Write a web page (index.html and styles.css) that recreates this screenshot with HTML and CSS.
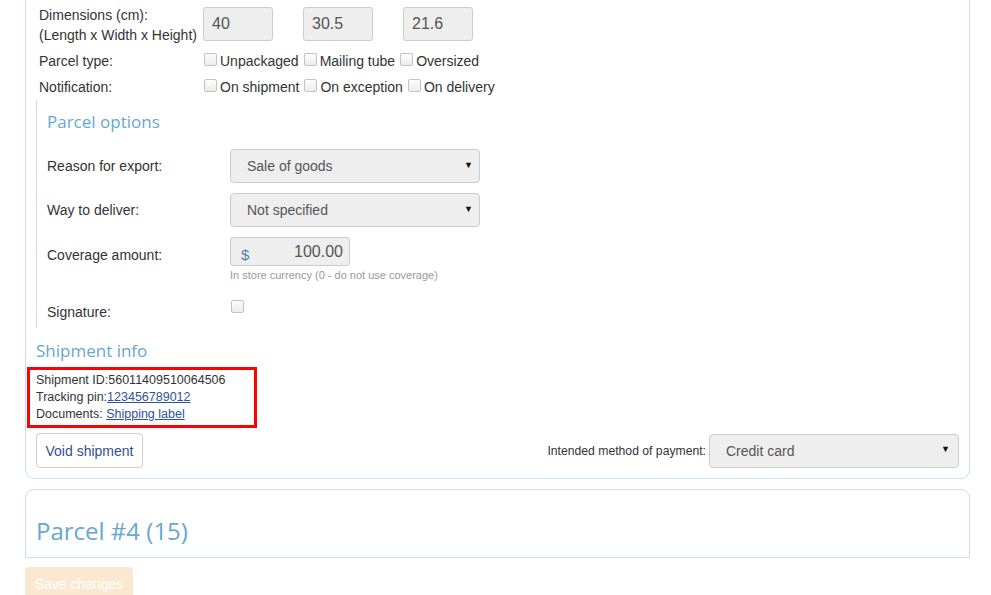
FILE: index.html
```html
<!DOCTYPE html>
<html>
<head>
<meta charset="utf-8">
<link rel="stylesheet" href="styles.css">
</head>
<body>
<div class="card card-main">
  <div class="frow frow-dims">
    <div class="flabel">Dimensions (cm):<br>(Length x Width x Height)</div>
    <div class="dims">
      <div class="tinput">40</div>
      <div class="tinput">30.5</div>
      <div class="tinput">21.6</div>
    </div>
  </div>
  <div class="frow">
    <div class="flabel">Parcel type:</div>
    <div class="checks">
      <label class="chk"><span class="box"></span>Unpackaged</label>
      <label class="chk"><span class="box"></span>Mailing tube</label>
      <label class="chk"><span class="box"></span>Oversized</label>
    </div>
  </div>
  <div class="frow">
    <div class="flabel">Notification:</div>
    <div class="checks">
      <label class="chk"><span class="box"></span>On shipment</label>
      <label class="chk"><span class="box"></span>On exception</label>
      <label class="chk"><span class="box"></span>On delivery</label>
    </div>
  </div>

  <div class="options">
    <h3 class="sect-title">Parcel options</h3>
    <div class="orow orow-center">
      <div class="olabel">Reason for export:</div>
      <div class="sel sel-opt"><span>Sale of goods</span><span class="arrow">&#9660;</span></div>
    </div>
    <div class="orow orow-center">
      <div class="olabel">Way to deliver:</div>
      <div class="sel sel-opt"><span>Not specified</span><span class="arrow">&#9660;</span></div>
    </div>
    <div class="orow orow-top">
      <div class="olabel olabel-pad">Coverage amount:</div>
      <div class="ctrl">
        <div class="money"><span class="cur">$</span><span>100.00</span></div>
        <div class="hint">In store currency (0 - do not use coverage)</div>
      </div>
    </div>
    <div class="orow orow-top orow-sig">
      <div class="olabel olabel-sig">Signature:</div>
      <span class="box box-sig"></span>
    </div>
  </div>

  <h3 class="sect-title sect-ship">Shipment info</h3>
  <div class="shipbox">
    <div>Shipment ID:56011409510064506</div>
    <div>Tracking pin:<a href="#">123456789012</a></div>
    <div>Documents: <a href="#">Shipping label</a></div>
  </div>

  <div class="bottom">
    <button class="btn">Void shipment</button>
    <div class="pay">
      <span class="pay-label">Intended method of payment:</span>
      <div class="sel sel-pay"><span>Credit card</span><span class="arrow">&#9660;</span></div>
    </div>
  </div>
</div>

<div class="card card-next">
  <h2 class="parcel-title">Parcel #4 (15)</h2>
</div>

<button class="save">Save changes</button>
</body>
</html>
```

FILE: styles.css
```css
* { box-sizing: border-box; }
html, body { margin: 0; padding: 0; background: #fff; }
body {
  font-family: "Liberation Sans", Arial, sans-serif;
  font-size: 14px;
  color: #333;
  overflow: hidden;
  height: 595px;
}
.card {
  width: 945px;
  margin-left: 25px;
  border: 1px solid #cddde8;
  background: #fff;
}
.card-main {
  border-top: none;
  border-radius: 0 0 9px 9px;
  padding: 5px 10px 10px 10px;
}
.frow {
  display: flex;
  margin-left: 3px;
  margin-top: 6px;
  line-height: 20px;
}
.frow-dims { margin-top: 0; }
.flabel { width: 164px; flex: none; }
.dims { display: flex; gap: 30px; margin-top: 2px; }
.tinput {
  width: 70px;
  height: 34px;
  background: #eee;
  border: 1px solid #ccc;
  border-radius: 3px;
  font-size: 16px;
  color: #555;
  padding: 6px 8px;
  line-height: 20px;
}
.checks { display: flex; align-items: center; }
.chk { display: flex; align-items: center; margin-right: 4px; }
.box {
  display: inline-block;
  width: 13px;
  height: 13px;
  border: 1px solid #c3c3c3;
  border-radius: 2px;
  background: linear-gradient(#fcfcfc, #ececec);
  margin: -4px 3px 0 1px;
  flex: none;
}
.options {
  border-left: 1px solid #c8dcec;
  margin-top: 3px;
  padding: 10px 0 6px 10px;
}
.sect-title {
  margin: 0;
  font-family: "Open Sans", sans-serif;
  font-weight: normal;
  font-size: 17px;
  line-height: 24px;
  color: #68a7d1;
}
.orow { display: flex; margin-top: 10px; }
.options .sect-title + .orow { margin-top: 15px; }
.orow-center { align-items: center; }
.orow-top { align-items: flex-start; }
.olabel { width: 183px; flex: none; line-height: 20px; }
.olabel-pad { padding-top: 8px; }
.sel {
  display: flex;
  justify-content: space-between;
  align-items: center;
  height: 34px;
  width: 250px;
  background: #eee;
  border: 1px solid #ccc;
  border-radius: 4px;
  color: #555;
  padding: 0 6px 0 16px;
  font-size: 14px;
}
.arrow { font-size: 9px; color: #111; margin-top: -3px; }
.money {
  width: 120px;
  height: 29px;
  background: #eee;
  border: 1px solid #ccc;
  border-radius: 3px;
  display: flex;
  justify-content: space-between;
  align-items: center;
  padding: 0 6px 0 10px;
  font-size: 16px;
  color: #555;
}
.cur { color: #4b7fb0; font-size: 15px; margin-top: 5px; }
.hint { font-size: 11px; color: #999; line-height: 14px; margin-top: 2px; }
.orow-sig { margin-top: 16px; }
.olabel-sig { padding-top: 4px; }
.box-sig { margin: 2px 0 0 1px; }
.sect-ship { margin-top: 11px; }
.shipbox {
  width: 230px;
  margin: 4px 0 0 -9px;
  border: 3px solid #f00;
  padding: 2px 6px;
  font-size: 12.5px;
  line-height: 17px;
  color: #333;
}
.shipbox a { color: #2d52a0; text-decoration: underline; }
.bottom {
  display: flex;
  justify-content: space-between;
  align-items: center;
  margin-top: 5px;
}
.btn {
  font-family: "Liberation Sans", Arial, sans-serif;
  font-size: 14px;
  color: #33508c;
  background: #fff;
  border: 1px solid #ccc;
  border-radius: 4px;
  height: 35px;
  padding: 0 8px;
  width: 107px;
}
.pay { display: flex; align-items: center; }
.pay-label { font-size: 12.2px; margin-right: 3px; }
.sel-pay { padding-left: 16px; padding-right: 8px; }
.card-next {
  margin-top: 10px;
  border-radius: 9px 9px 0 0;
  padding: 25px 10px 10px 10px;
}
.parcel-title {
  margin: 0;
  font-family: "Open Sans", sans-serif;
  font-weight: normal;
  font-size: 24px;
  line-height: 32px;
  color: #68a7d1;
}
.save {
  display: block;
  margin: 9px 0 0 25px;
  width: 108px;
  height: 34px;
  background: #fbe8d0;
  border: none;
  border-radius: 4px;
  color: #fff;
  font-family: "Liberation Sans", Arial, sans-serif;
  font-size: 14px;
}
```
